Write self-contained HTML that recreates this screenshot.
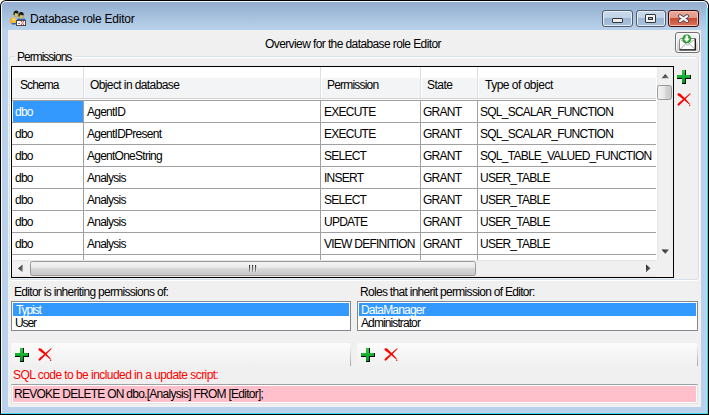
<!DOCTYPE html>
<html><head><meta charset="utf-8">
<style>
*{margin:0;padding:0;box-sizing:border-box}
html,body{width:709px;height:415px;overflow:hidden;background:#fff}
body{position:relative;font-family:"Liberation Sans",sans-serif;font-size:12px;color:#000}
.a{position:absolute}
.t{position:absolute;white-space:pre;line-height:16px}
svg{position:absolute;display:block}
.cbtn{position:absolute;top:10px;height:17px;border:1px solid #4f5c6e;border-radius:3px;background:linear-gradient(#c8d9eb 0,#c1d3e8 7px,#9db6d3 7px,#a9c2de 100%);box-shadow:inset 0 0 0 1px #e6eef7}
</style></head><body>
<div class="a" style="left:0px;top:0px;width:709px;height:415px;background:#000;border-radius:6px 6px 0 0"></div>
<div class="a" style="left:1px;top:1px;width:707px;height:413px;background:#f4f8fc;border-radius:5px 5px 0 0"></div>
<div class="a" style="left:2px;top:2px;width:705px;height:411px;background:linear-gradient(#93aed0 0px,#b9d1ea 28px,#b9d1ea 100%);border-radius:4px 4px 0 0"></div>
<div class="a" style="left:0px;top:414px;width:709px;height:1px;background:#000"></div>
<div class="a" style="left:1px;top:413px;width:707px;height:1px;background:#36d8ee"></div>
<div class="a" style="left:707px;top:8px;width:1px;height:405px;background:#36d8ee"></div>
<div class="a" style="left:706px;top:8px;width:1px;height:405px;background:#c8d4ea"></div>
<div class="a" style="left:2px;top:412px;width:705px;height:1px;background:#c8d4ea"></div>
<svg style="left:10px;top:10px" width="16" height="16" viewBox="0 0 16 16">
<defs><radialGradient id="ob" cx="0.6" cy="0.35" r="0.7"><stop offset="0" stop-color="#ffe060"/><stop offset="0.6" stop-color="#f7b22a"/><stop offset="1" stop-color="#e08a10"/></radialGradient></defs>
<ellipse cx="3.2" cy="10.8" rx="3" ry="3.6" fill="url(#ob)"/>
<rect x="2" y="13" width="4" height="1.4" fill="#2d5fc0"/>
<ellipse cx="6" cy="4.6" rx="2.3" ry="2.6" fill="#a89a48"/>
<ellipse cx="6.2" cy="5.2" rx="1.6" ry="1.6" fill="#cfc36a"/>
<path d="M3.4 4.2Q3.6 0.4 6.4 0.5Q8.6 0.7 8.6 3.2L7.6 3.6L5 2.8L4.2 5.5Z" fill="#1d1410"/>
<rect x="7" y="8.6" width="8.4" height="2.4" rx="1" fill="#3163c4"/>
<ellipse cx="11" cy="6.4" rx="2.4" ry="2.6" fill="#a89a48"/>
<ellipse cx="11.2" cy="7" rx="1.7" ry="1.6" fill="#cfc36a"/>
<path d="M8.4 6Q8.4 2 11.2 2Q14 2 13.8 5.6L12.8 5L10 4.4L9.2 6.8Z" fill="#1d1410"/>
<rect x="6" y="10" width="10" height="6" fill="#4a4a4a"/>
<rect x="7" y="11" width="8" height="4" fill="#fafafa"/>
<rect x="8" y="13" width="2" height="1" fill="#8a8a8a"/>
<path d="M11 11.2h1v1h-1zM13 11.2h1v1h-1zM12 12.5h1v1h-1zM11 13.8h1v1h-1zM13 13.8h1v1h-1z" fill="#e41010"/>
</svg>
<div class="t" style="left:30px;top:11px;letter-spacing:-0.25px">Database role Editor</div>
<div class="cbtn" style="left:602px;width:31px"></div>
<div class="a" style="left:612px;top:18px;width:11px;height:5px;border:1px solid #333;border-radius:1px;background:#eee"></div>
<div class="cbtn" style="left:636px;width:30px"></div>
<div class="a" style="left:645px;top:14px;width:11px;height:9px;border:1px solid #333;border-radius:1px;background:#f4f4f4"></div>
<div class="a" style="left:648px;top:17px;width:5px;height:3px;border:1px solid #333;background:#9db6d3"></div>
<div class="cbtn" style="left:668px;width:31px;border-color:#3d0a0a;background:linear-gradient(#e9a99c 0,#e29887 7px,#c74a2f 7px,#d8765e 100%);box-shadow:inset 0 0 0 1px #f0c0b0"></div>
<svg style="left:677px;top:13px" width="14" height="11" viewBox="0 0 14 11">
<path d="M3 3.2L10 8M10 3.2L3 8" stroke="#343848" stroke-width="3.9" stroke-linecap="round"/>
<path d="M3 3.2L10 8M10 3.2L3 8" stroke="#f2f2f2" stroke-width="2.3" stroke-linecap="round"/>
</svg>
<div class="a" style="left:8px;top:30px;width:693px;height:377px;background:#f0f0f0"></div>
<div class="t" style="left:265px;top:36px;letter-spacing:-0.6px">Overview for the database role Editor</div>
<div class="a" style="left:675px;top:32px;width:25px;height:21px;border:1px solid #707070;border-radius:3px;background:linear-gradient(#f2f2f2 0,#ebebeb 9px,#dddddd 10px,#d0d0d0 100%);box-shadow:inset 0 0 0 1px #fcfcfc"></div>
<svg style="left:678px;top:34px" width="19" height="17" viewBox="0 0 19 17">
<rect x="1.5" y="4.5" width="16" height="11" fill="#fff"/>
<path d="M1.5 15.5V5.5L2.5 4.5H16.5" stroke="#8a8a8a" fill="none"/>
<path d="M16.5 4.5L17.3 5.3V15.8H1.5" stroke="#111" stroke-width="1.3" fill="none"/>
<path d="M2.5 5.5L9.5 11L16.5 5.5M2.5 15L7.5 10M16.5 15L11.5 10" stroke="#a8a8a8" fill="none"/>
<defs><radialGradient id="gc" cx="0.5" cy="0.5" r="0.5"><stop offset="0" stop-color="#5cd85c"/><stop offset="0.7" stop-color="#2aa832"/><stop offset="1" stop-color="#12801a"/></radialGradient></defs>
<circle cx="8.8" cy="4.9" r="4.4" fill="url(#gc)"/>
<path d="M7.6 1.6h2.5v3.2h1.7l-3 3.2l-3-3.2h1.8z" fill="#fff"/>
</svg>
<div class="a" style="left:10px;top:57px;width:690px;height:224px;background:transparent;border:1px solid #fff;border-radius:3px"></div>
<div class="a" style="left:9px;top:56px;width:690px;height:224px;background:transparent;border:1px solid #d5dfe5;border-radius:3px"></div>
<div class="a" style="left:15px;top:50px;width:59px;height:12px;background:#f0f0f0"></div>
<div class="t" style="left:17px;top:49px;letter-spacing:-1.0px">Permissions</div>
<svg style="left:677px;top:70px" width="14" height="14" viewBox="0 0 14 14">
<path d="M5 0h4v5h5v4h-5v5h-4v-5h-5v-4h5z" fill="#000"/>
<defs><linearGradient id="pg677" x1="0" x2="0" y1="0" y2="1"><stop offset="0" stop-color="#2ccc44"/><stop offset="1" stop-color="#00961c"/></linearGradient></defs>
<path d="M5 0h3v5h5v3h-5v5h-3v-5h-5v-3h5z" fill="url(#pg677)"/>
</svg>
<svg style="left:677px;top:93px" width="14" height="13" viewBox="0 0 15 14" preserveAspectRatio="none">
<path d="M0.3 1.3Q0.6 0.2 2 0.3L3.6 0.9L9 6.2L13.8 11.6L13.2 12.3L7.6 7.6L1.2 2.6Z" fill="#f00"/>
<path d="M13.9 0.2L14.7 0.9L8.4 7.2L3.6 12.2Q2.6 13.6 1.4 13.6Q0.3 13.2 0.6 12L2 10.6L6.8 6.4Z" fill="#f00"/>
<circle cx="13.6" cy="13.2" r="0.8" fill="#f00"/>
</svg>
<div class="a" style="left:11px;top:66px;width:663px;height:212px;background:#fff;border:1px solid #000"></div>
<div class="a" style="left:12px;top:67px;width:644px;height:11px;background:#fff"></div>
<div class="a" style="left:12px;top:78px;width:644px;height:20px;background:#f3f4f6"></div>
<div class="a" style="left:12px;top:98px;width:644px;height:1px;background:#d5d5d5"></div>
<div class="a" style="left:12px;top:99px;width:644px;height:1px;background:#fbfbfb"></div>
<div class="a" style="left:83px;top:67px;width:1px;height:31px;background:#dedfe2"></div>
<div class="a" style="left:84px;top:67px;width:1px;height:31px;background:#fff"></div>
<div class="a" style="left:320px;top:67px;width:1px;height:31px;background:#dedfe2"></div>
<div class="a" style="left:321px;top:67px;width:1px;height:31px;background:#fff"></div>
<div class="a" style="left:420px;top:67px;width:1px;height:31px;background:#dedfe2"></div>
<div class="a" style="left:421px;top:67px;width:1px;height:31px;background:#fff"></div>
<div class="a" style="left:477px;top:67px;width:1px;height:31px;background:#dedfe2"></div>
<div class="a" style="left:478px;top:67px;width:1px;height:31px;background:#fff"></div>
<div class="t" style="left:20px;top:77px;letter-spacing:-0.9px">Schema</div>
<div class="t" style="left:90px;top:77px;letter-spacing:-0.6px">Object in database</div>
<div class="t" style="left:327px;top:77px;letter-spacing:-0.8px">Permission</div>
<div class="t" style="left:427px;top:77px;letter-spacing:-0.5px">State</div>
<div class="t" style="left:485px;top:77px;letter-spacing:-0.5px">Type of object</div>
<div class="a" style="left:12px;top:100px;width:644px;height:1px;background:#a0a0a0"></div>
<div class="a" style="left:12px;top:122px;width:644px;height:1px;background:#a0a0a0"></div>
<div class="a" style="left:12px;top:144px;width:644px;height:1px;background:#a0a0a0"></div>
<div class="a" style="left:12px;top:166px;width:644px;height:1px;background:#a0a0a0"></div>
<div class="a" style="left:12px;top:188px;width:644px;height:1px;background:#a0a0a0"></div>
<div class="a" style="left:12px;top:210px;width:644px;height:1px;background:#a0a0a0"></div>
<div class="a" style="left:12px;top:232px;width:644px;height:1px;background:#a0a0a0"></div>
<div class="a" style="left:12px;top:254px;width:644px;height:1px;background:#a0a0a0"></div>
<div class="a" style="left:83px;top:100px;width:1px;height:160px;background:#a0a0a0"></div>
<div class="a" style="left:320px;top:100px;width:1px;height:160px;background:#a0a0a0"></div>
<div class="a" style="left:420px;top:100px;width:1px;height:160px;background:#a0a0a0"></div>
<div class="a" style="left:477px;top:100px;width:1px;height:160px;background:#a0a0a0"></div>
<div class="a" style="left:13px;top:101px;width:70px;height:21px;background:#3399ff"></div>
<div class="t" style="left:15px;top:104px;letter-spacing:-0.75px;color:#fff">dbo</div>
<div class="t" style="left:87px;top:104px;letter-spacing:-0.75px">AgentID</div>
<div class="t" style="left:324px;top:104px;letter-spacing:-0.75px">EXECUTE</div>
<div class="t" style="left:423px;top:104px;letter-spacing:-0.75px">GRANT</div>
<div class="t" style="left:480px;top:104px;letter-spacing:-0.75px">SQL_SCALAR_FUNCTION</div>
<div class="t" style="left:15px;top:126px;letter-spacing:-0.75px">dbo</div>
<div class="t" style="left:87px;top:126px;letter-spacing:-0.75px">AgentIDPresent</div>
<div class="t" style="left:324px;top:126px;letter-spacing:-0.75px">EXECUTE</div>
<div class="t" style="left:423px;top:126px;letter-spacing:-0.75px">GRANT</div>
<div class="t" style="left:480px;top:126px;letter-spacing:-0.75px">SQL_SCALAR_FUNCTION</div>
<div class="t" style="left:15px;top:148px;letter-spacing:-0.75px">dbo</div>
<div class="t" style="left:87px;top:148px;letter-spacing:-0.75px">AgentOneString</div>
<div class="t" style="left:324px;top:148px;letter-spacing:-0.75px">SELECT</div>
<div class="t" style="left:423px;top:148px;letter-spacing:-0.75px">GRANT</div>
<div class="t" style="left:480px;top:148px;letter-spacing:-0.75px">SQL_TABLE_VALUED_FUNCTION</div>
<div class="t" style="left:15px;top:170px;letter-spacing:-0.75px">dbo</div>
<div class="t" style="left:87px;top:170px;letter-spacing:-0.75px">Analysis</div>
<div class="t" style="left:324px;top:170px;letter-spacing:-0.75px">INSERT</div>
<div class="t" style="left:423px;top:170px;letter-spacing:-0.75px">GRANT</div>
<div class="t" style="left:480px;top:170px;letter-spacing:-0.75px">USER_TABLE</div>
<div class="t" style="left:15px;top:192px;letter-spacing:-0.75px">dbo</div>
<div class="t" style="left:87px;top:192px;letter-spacing:-0.75px">Analysis</div>
<div class="t" style="left:324px;top:192px;letter-spacing:-0.75px">SELECT</div>
<div class="t" style="left:423px;top:192px;letter-spacing:-0.75px">GRANT</div>
<div class="t" style="left:480px;top:192px;letter-spacing:-0.75px">USER_TABLE</div>
<div class="t" style="left:15px;top:214px;letter-spacing:-0.75px">dbo</div>
<div class="t" style="left:87px;top:214px;letter-spacing:-0.75px">Analysis</div>
<div class="t" style="left:324px;top:214px;letter-spacing:-0.75px">UPDATE</div>
<div class="t" style="left:423px;top:214px;letter-spacing:-0.75px">GRANT</div>
<div class="t" style="left:480px;top:214px;letter-spacing:-0.75px">USER_TABLE</div>
<div class="t" style="left:15px;top:236px;letter-spacing:-0.75px">dbo</div>
<div class="t" style="left:87px;top:236px;letter-spacing:-0.75px">Analysis</div>
<div class="t" style="left:324px;top:236px;letter-spacing:-0.75px">VIEW DEFINITION</div>
<div class="t" style="left:423px;top:236px;letter-spacing:-0.75px">GRANT</div>
<div class="t" style="left:480px;top:236px;letter-spacing:-0.75px">USER_TABLE</div>
<div class="a" style="left:657px;top:67px;width:16px;height:193px;background:linear-gradient(90deg,#e6e6e6 0,#f0f0f0 2px,#f0f0f0 13px,#ececec 16px)"></div>
<svg style="left:656px;top:67px" width="17" height="193" viewBox="0 0 17 193">
<path d="M5.6 11.2L9.3 7L13 11.2z" fill="url(#ag)"/>
<rect x="1.5" y="18.5" width="14" height="14" rx="2" fill="url(#vg)" stroke="#9a9a9a"/>
<path d="M5.6 182.6L13 182.6L9.3 186.9z" fill="url(#ag)"/>
<defs><linearGradient id="ag" x1="0" x2="1" y1="0" y2="1"><stop offset="0" stop-color="#151515"/><stop offset="1" stop-color="#8c8c8c"/></linearGradient><linearGradient id="vg" x1="0" x2="1" y1="0" y2="0"><stop offset="0" stop-color="#f4f4f4"/><stop offset="0.5" stop-color="#e6e6e6"/><stop offset="0.55" stop-color="#d6d6d6"/><stop offset="1" stop-color="#c8c8c8"/></linearGradient>
<linearGradient id="hg" x1="0" x2="0" y1="0" y2="1"><stop offset="0" stop-color="#f4f4f4"/><stop offset="0.45" stop-color="#e8e8e8"/><stop offset="0.5" stop-color="#d8d8d8"/><stop offset="1" stop-color="#c6c6c6"/></linearGradient></defs>
</svg>
<div class="a" style="left:12px;top:260px;width:644px;height:17px;background:linear-gradient(#e3e3e3 0,#f0f0f0 2px,#f0f0f0 14px,#e8e8e8 17px)"></div>
<svg style="left:12px;top:260px" width="644" height="17" viewBox="0 0 644 17">
<path d="M10.6 4.5L6 8.4L10.6 12.3z" fill="url(#ag)"/>
<rect x="18.5" y="1.5" width="445" height="14" rx="2" fill="url(#hg)" stroke="#9a9a9a"/>
<linearGradient id="gg" x1="0" x2="0" y1="0" y2="1"><stop offset="0" stop-color="#2a2a2a"/><stop offset="1" stop-color="#a0a0a0"/></linearGradient><path d="M238 5h1v7h-1zM241 5h1v7h-1zM244 5h1v7h-1z" fill="#fff" opacity="0.8"/><path d="M237 5h1.2v7h-1.2zM240 5h1.2v7h-1.2zM243 5h1.2v7h-1.2z" fill="url(#gg)"/>
<path d="M634 4.4L638.6 8.3L634 12.2z" fill="url(#ag)"/>
</svg>
<div class="a" style="left:656px;top:260px;width:17px;height:17px;background:#f0f0f0"></div>
<div class="t" style="left:14px;top:284px;letter-spacing:-0.7px">Editor is inheriting permissions of:</div>
<div class="t" style="left:360px;top:284px;letter-spacing:-0.7px">Roles that inherit permission of Editor:</div>
<div class="a" style="left:11px;top:301px;width:340px;height:30px;background:#fff;border:1px solid #828790"></div>
<div class="a" style="left:13px;top:303px;width:336px;height:13px;background:#3399ff"></div>
<div class="t" style="left:16px;top:302px;letter-spacing:-1.1px;color:#fff">Typist</div>
<div class="t" style="left:15px;top:315px;letter-spacing:-1.1px">User</div>
<div class="a" style="left:357px;top:301px;width:341px;height:30px;background:#fff;border:1px solid #828790"></div>
<div class="a" style="left:359px;top:303px;width:337px;height:13px;background:#3399ff"></div>
<div class="t" style="left:361px;top:302px;letter-spacing:-0.8px;color:#fff">DataManager</div>
<div class="t" style="left:361px;top:315px;letter-spacing:-0.9px">Administrator</div>
<div class="a" style="left:11px;top:343px;width:340px;height:24px;background:linear-gradient(#fbfbfb,#f0f0f0);border-radius:3px 3px 0 0"></div>
<div class="a" style="left:350px;top:346px;width:1px;height:20px;background:linear-gradient(#f0f0f0,#a8a8a8)"></div>
<div class="a" style="left:357px;top:343px;width:341px;height:24px;background:linear-gradient(#fbfbfb,#f0f0f0);border-radius:3px 3px 0 0"></div>
<div class="a" style="left:697px;top:346px;width:1px;height:20px;background:linear-gradient(#f0f0f0,#a8a8a8)"></div>
<svg style="left:15px;top:348px" width="14" height="14" viewBox="0 0 14 14">
<path d="M5 0h4v5h5v4h-5v5h-4v-5h-5v-4h5z" fill="#000"/>
<defs><linearGradient id="pg15" x1="0" x2="0" y1="0" y2="1"><stop offset="0" stop-color="#2ccc44"/><stop offset="1" stop-color="#00961c"/></linearGradient></defs>
<path d="M5 0h3v5h5v3h-5v5h-3v-5h-5v-3h5z" fill="url(#pg15)"/>
</svg>
<svg style="left:38px;top:348px" width="14" height="13" viewBox="0 0 15 14" preserveAspectRatio="none">
<path d="M0.3 1.3Q0.6 0.2 2 0.3L3.6 0.9L9 6.2L13.8 11.6L13.2 12.3L7.6 7.6L1.2 2.6Z" fill="#f00"/>
<path d="M13.9 0.2L14.7 0.9L8.4 7.2L3.6 12.2Q2.6 13.6 1.4 13.6Q0.3 13.2 0.6 12L2 10.6L6.8 6.4Z" fill="#f00"/>
<circle cx="13.6" cy="13.2" r="0.8" fill="#f00"/>
</svg>
<svg style="left:361px;top:348px" width="14" height="14" viewBox="0 0 14 14">
<path d="M5 0h4v5h5v4h-5v5h-4v-5h-5v-4h5z" fill="#000"/>
<defs><linearGradient id="pg361" x1="0" x2="0" y1="0" y2="1"><stop offset="0" stop-color="#2ccc44"/><stop offset="1" stop-color="#00961c"/></linearGradient></defs>
<path d="M5 0h3v5h5v3h-5v5h-3v-5h-5v-3h5z" fill="url(#pg361)"/>
</svg>
<svg style="left:384px;top:348px" width="14" height="13" viewBox="0 0 15 14" preserveAspectRatio="none">
<path d="M0.3 1.3Q0.6 0.2 2 0.3L3.6 0.9L9 6.2L13.8 11.6L13.2 12.3L7.6 7.6L1.2 2.6Z" fill="#f00"/>
<path d="M13.9 0.2L14.7 0.9L8.4 7.2L3.6 12.2Q2.6 13.6 1.4 13.6Q0.3 13.2 0.6 12L2 10.6L6.8 6.4Z" fill="#f00"/>
<circle cx="13.6" cy="13.2" r="0.8" fill="#f00"/>
</svg>
<div class="t" style="left:13px;top:367px;letter-spacing:-0.55px;color:#f00">SQL code to be included in a update script:</div>
<div class="a" style="left:11px;top:384px;width:687px;height:20px;background:#ffc0cb;border-top:1px solid #a0a0a0;border-left:1px solid #e3e3e3;border-right:1px solid #e3e3e3;border-bottom:1px solid #e3e3e3;box-shadow:inset 1px 1px 0 #fff, inset -1px -1px 0 #fff"></div>
<div class="t" style="left:14px;top:386px;letter-spacing:-0.73px">REVOKE DELETE ON dbo.[Analysis] FROM [Editor];</div>
</body></html>
